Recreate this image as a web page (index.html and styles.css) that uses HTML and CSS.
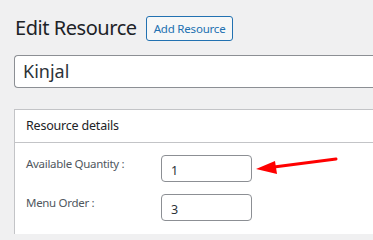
FILE: index.html
```html
<!DOCTYPE html>
<html>
<head>
<meta charset="utf-8">
<link rel="stylesheet" href="styles.css">
</head>
<body>
<div class="wrap">
  <div class="head">
    <h1 class="title">Edit Resource</h1>
    <a class="btn">Add Resource</a>
  </div>
  <div class="title-input">Kinjal</div>
  <div class="panel">
    <div class="panel-head">Resource details</div>
    <div class="panel-body">
      <div class="row">
        <label class="lbl">Available Quantity :</label>
        <div class="field">1</div>
        <svg class="arrow" width="84" height="20" viewBox="0 0 84 20">
          <line x1="14" y1="10.5" x2="80" y2="2" stroke="#f00" stroke-width="3" stroke-linecap="round"/>
          <polygon points="0,12 19,4 21,17" fill="#f00"/>
        </svg>
      </div>
      <div class="row">
        <label class="lbl">Menu Order :</label>
        <div class="field">3</div>
      </div>
    </div>
  </div>
</div>
</body>
</html>
```
FILE: styles.css
```css
html, body {
  margin: 0;
  padding: 0;
  background: #f0f0f1;
  overflow: hidden;
  font-family: "Noto Sans", "Open Sans", sans-serif;
  color: #1d2327;
}
.wrap {
  padding: 14px 0 0 14px;
}
.head {
  display: flex;
  align-items: center;
  gap: 9px;
  height: 28px;
}
.title {
  margin: 0 0 0 1px;
  font-size: 20px;
  font-weight: 400;
  letter-spacing: -0.45px;
  line-height: 28px;
  color: #1d2327;
}
.btn {
  display: inline-block;
  box-sizing: border-box;
  height: 25px;
  line-height: 23px;
  padding: 0 7px;
  border: 1px solid #2271b1;
  border-radius: 3px;
  background: #f6f7f7;
  color: #2271b1;
  font-size: 11.5px;
  letter-spacing: -0.2px;
}
.title-input {
  margin-top: 13px;
  box-sizing: border-box;
  height: 33px;
  line-height: 31px;
  border: 1px solid #8c8f94;
  border-right: none;
  border-radius: 4px 0 0 4px;
  background: #fff;
  padding: 0 8px;
  font-size: 18px;
  color: #2c3338;
}
.panel {
  margin-top: 21px;
  background: #fff;
  border: 1px solid #c3c4c7;
  border-right: none;
  border-bottom: none;
  height: 124px;
}
.panel-head {
  height: 32px;
  line-height: 32px;
  padding-left: 11px;
  border-bottom: 1px solid #c3c4c7;
  font-size: 12.5px;
  letter-spacing: -0.2px;
  color: #1d2327;
}
.panel-body {
  padding: 12px 0 0 11px;
  display: flex;
  flex-direction: column;
  gap: 12px;
}
.row {
  position: relative;
  display: flex;
  align-items: flex-start;
}
.lbl {
  width: 135px;
  font-size: 11.5px;
  letter-spacing: -0.3px;
  color: #50575e;
  line-height: 16px;
  padding-top: 1px;
}
.field {
  box-sizing: border-box;
  width: 91px;
  height: 27px;
  line-height: 27px;
  border: 1px solid #8c8f94;
  border-radius: 4px;
  padding: 1px 9px 0;
  font-size: 12.5px;
  color: #2c3338;
}
.arrow {
  position: absolute;
  left: 230px;
  top: 2px;
}
```
